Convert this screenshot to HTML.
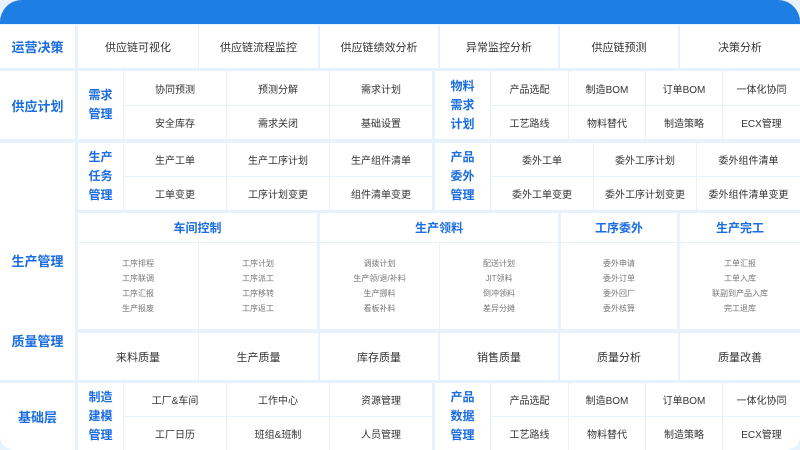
<!DOCTYPE html>
<html><head><meta charset="utf-8"><style>
*{margin:0;padding:0;box-sizing:border-box}
body{width:800px;height:450px;overflow:hidden;background:#e8f2fc;font-family:"Liberation Sans","Noto Sans CJK SC",sans-serif;position:relative}
.top{position:absolute;left:0;top:0;width:800px;height:24px;background:#1d7fe3;border-radius:22px 22px 0 0}
.c{position:absolute;background:#fff;display:flex;align-items:center;justify-content:center;text-align:center;color:#333;font-size:11px}
.L{color:#1a6de0;font-weight:bold;font-size:13px}
.S{color:#1a6de0;font-weight:bold;font-size:12px;line-height:19px}
.H{color:#1a6de0;font-weight:bold;font-size:12px}
.sm{font-size:8px;color:#777;line-height:15px;flex-direction:column}
.g{font-size:10px}
.t{position:absolute;color:#1a6de0;font-weight:bold;font-size:13px;width:75px;text-align:center;left:0}
</style></head><body>
<div class="top"></div>
<!-- row1 -->
<div class="c L" style="left:0;top:25px;width:75px;height:43px">运营决策</div>
<div class="c" style="left:78px;top:25px;width:120px;height:43px">供应链可视化</div>
<div class="c" style="left:199px;top:25px;width:119px;height:43px">供应链流程监控</div>
<div class="c" style="left:320px;top:25px;width:118px;height:43px">供应链绩效分析</div>
<div class="c" style="left:440px;top:25px;width:118px;height:43px">异常监控分析</div>
<div class="c" style="left:560px;top:25px;width:118px;height:43px">供应链预测</div>
<div class="c" style="left:680px;top:25px;width:120px;height:43px">决策分析</div>
<!-- row2 -->
<div class="c L" style="left:0;top:71px;width:75px;height:68px">供应计划</div>
<div class="c S" style="left:78px;top:71px;width:45px;height:68px">需求<br>管理</div>
<div class="c g" style="left:124px;top:71px;width:102px;height:34px">协同预测</div>
<div class="c g" style="left:227px;top:71px;width:102px;height:34px">预测分解</div>
<div class="c g" style="left:330px;top:71px;width:102px;height:34px">需求计划</div>
<div class="c g" style="left:124px;top:106px;width:102px;height:33px">安全库存</div>
<div class="c g" style="left:227px;top:106px;width:102px;height:33px">需求关闭</div>
<div class="c g" style="left:330px;top:106px;width:102px;height:33px">基础设置</div>
<div class="c S" style="left:435px;top:71px;width:55px;height:68px">物料<br>需求<br>计划</div>
<div class="c g" style="left:491px;top:71px;width:77px;height:34px">产品选配</div>
<div class="c g" style="left:569px;top:71px;width:76px;height:34px">制造BOM</div>
<div class="c g" style="left:646px;top:71px;width:76px;height:34px">订单BOM</div>
<div class="c g" style="left:723px;top:71px;width:77px;height:34px">一体化协同</div>
<div class="c g" style="left:491px;top:106px;width:77px;height:33px">工艺路线</div>
<div class="c g" style="left:569px;top:106px;width:76px;height:33px">物料替代</div>
<div class="c g" style="left:646px;top:106px;width:76px;height:33px">制造策略</div>
<div class="c g" style="left:723px;top:106px;width:77px;height:33px">ECX管理</div>
<!-- row3 -->
<div class="c" style="left:0;top:143px;width:75px;height:237px"></div>
<div class="t" style="top:251px">生产管理</div>
<div class="t" style="top:331px">质量管理</div>
<div class="c S" style="left:78px;top:143px;width:45px;height:67px">生产<br>任务<br>管理</div>
<div class="c g" style="left:124px;top:143px;width:102px;height:33px">生产工单</div>
<div class="c g" style="left:227px;top:143px;width:102px;height:33px">生产工序计划</div>
<div class="c g" style="left:330px;top:143px;width:102px;height:33px">生产组件清单</div>
<div class="c g" style="left:124px;top:177px;width:102px;height:33px">工单变更</div>
<div class="c g" style="left:227px;top:177px;width:102px;height:33px">工序计划变更</div>
<div class="c g" style="left:330px;top:177px;width:102px;height:33px">组件清单变更</div>
<div class="c S" style="left:435px;top:143px;width:55px;height:67px">产品<br>委外<br>管理</div>
<div class="c g" style="left:491px;top:143px;width:102px;height:33px">委外工单</div>
<div class="c g" style="left:594px;top:143px;width:102px;height:33px">委外工序计划</div>
<div class="c g" style="left:697px;top:143px;width:103px;height:33px">委外组件清单</div>
<div class="c g" style="left:491px;top:177px;width:102px;height:33px">委外工单变更</div>
<div class="c g" style="left:594px;top:177px;width:102px;height:33px">委外工序计划变更</div>
<div class="c g" style="left:697px;top:177px;width:103px;height:33px">委外组件清单变更</div>
<!-- row4 -->
<div class="c H" style="left:78px;top:213px;width:239px;height:29px">车间控制</div>
<div class="c H" style="left:320px;top:213px;width:238px;height:29px">生产领料</div>
<div class="c H" style="left:561px;top:213px;width:116px;height:29px">工序委外</div>
<div class="c H" style="left:680px;top:213px;width:120px;height:29px">生产完工</div>
<div class="c sm" style="left:78px;top:243px;width:120px;height:86px"><div>工序排程</div><div>工序联调</div><div>工序汇报</div><div>生产报废</div></div>
<div class="c sm" style="left:199px;top:243px;width:118px;height:86px"><div>工序计划</div><div>工序派工</div><div>工序移转</div><div>工序返工</div></div>
<div class="c sm" style="left:320px;top:243px;width:119px;height:86px"><div>调拨计划</div><div>生产领/退/补料</div><div>生产挪料</div><div>看板补料</div></div>
<div class="c sm" style="left:440px;top:243px;width:118px;height:86px"><div>配送计划</div><div>JIT领料</div><div>倒冲领料</div><div>差异分摊</div></div>
<div class="c sm" style="left:561px;top:243px;width:116px;height:86px"><div>委外申请</div><div>委外订单</div><div>委外回厂</div><div>委外核算</div></div>
<div class="c sm" style="left:680px;top:243px;width:120px;height:86px"><div>工单汇报</div><div>工单入库</div><div>联副到产品入库</div><div>完工退库</div></div>
<!-- quality -->
<div class="c" style="left:78px;top:333px;width:120px;height:47px">来料质量</div>
<div class="c" style="left:199px;top:333px;width:119px;height:47px">生产质量</div>
<div class="c" style="left:320px;top:333px;width:118px;height:47px">库存质量</div>
<div class="c" style="left:440px;top:333px;width:118px;height:47px">销售质量</div>
<div class="c" style="left:560px;top:333px;width:118px;height:47px">质量分析</div>
<div class="c" style="left:680px;top:333px;width:120px;height:47px">质量改善</div>
<!-- base -->
<div class="c L" style="left:0;top:383px;width:75px;height:67px;border-bottom-left-radius:14px">基础层</div>
<div class="c S" style="left:78px;top:383px;width:45px;height:67px">制造<br>建模<br>管理</div>
<div class="c g" style="left:124px;top:383px;width:102px;height:33px">工厂&amp;车间</div>
<div class="c g" style="left:227px;top:383px;width:102px;height:33px">工作中心</div>
<div class="c g" style="left:330px;top:383px;width:102px;height:33px">资源管理</div>
<div class="c g" style="left:124px;top:417px;width:102px;height:33px">工厂日历</div>
<div class="c g" style="left:227px;top:417px;width:102px;height:33px">班组&amp;班制</div>
<div class="c g" style="left:330px;top:417px;width:102px;height:33px">人员管理</div>
<div class="c S" style="left:435px;top:383px;width:55px;height:67px">产品<br>数据<br>管理</div>
<div class="c g" style="left:491px;top:383px;width:77px;height:33px">产品选配</div>
<div class="c g" style="left:569px;top:383px;width:76px;height:33px">制造BOM</div>
<div class="c g" style="left:646px;top:383px;width:76px;height:33px">订单BOM</div>
<div class="c g" style="left:723px;top:383px;width:77px;height:33px">一体化协同</div>
<div class="c g" style="left:491px;top:417px;width:77px;height:33px">工艺路线</div>
<div class="c g" style="left:569px;top:417px;width:76px;height:33px">物料替代</div>
<div class="c g" style="left:646px;top:417px;width:76px;height:33px">制造策略</div>
<div class="c g" style="left:723px;top:417px;width:77px;height:33px;border-bottom-right-radius:14px">ECX管理</div>
</body></html>
